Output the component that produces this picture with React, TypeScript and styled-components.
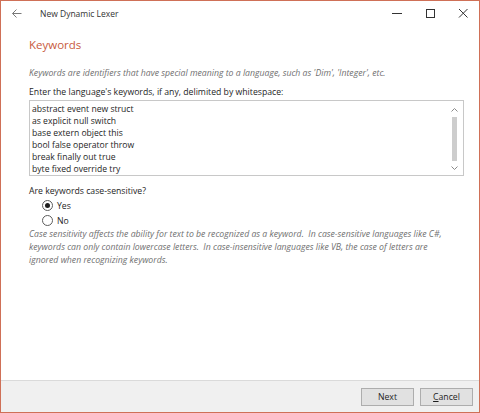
import React from 'react'
import styled, { createGlobalStyle } from 'styled-components'

const GlobalStyle = createGlobalStyle`
  html, body {
    margin: 0;
    padding: 0;
    background: #ffffff;
  }
  body {
    font-family: "Open Sans", "Noto Sans", sans-serif;
  }
`

const keywords = [
  'abstract event new struct',
  'as explicit null switch',
  'base extern object this',
  'bool false operator throw',
  'break finally out true',
  'byte fixed override try',
]

const noteLines = [
  'Case sensitivity affects the ability for text to be recognized as a keyword.\u00a0 In case-sensitive languages like C#,',
  'keywords can only contain lowercase letters.\u00a0 In case-insensitive languages like VB, the case of letters are',
  'ignored when recognizing keywords.',
]

function BackArrow() {
  return (
    <svg width="10" height="9" viewBox="0 0 10 9">
      <path d="M0.5 4.5 H9.5 M4.5 0.5 L0.5 4.5 L4.5 8.5" stroke="#7a7a7a" strokeWidth="1" fill="none" />
    </svg>
  )
}

function WindowGlyph({ kind }: { kind: 'min' | 'max' | 'close' }) {
  return (
    <svg width="10" height="10" viewBox="0 0 10 10">
      {kind === 'min' && <path d="M0 5.5 H10" stroke="#333" strokeWidth="1" />}
      {kind === 'max' && <rect x="1.5" y="1.5" width="8" height="8" stroke="#333" strokeWidth="1" fill="none" />}
      {kind === 'close' && <path d="M1 1 L9.5 9.5 M9.5 1 L1 9.5" stroke="#333" strokeWidth="1" />}
    </svg>
  )
}

function Chevron({ up }: { up: boolean }) {
  return (
    <svg width="7" height="4" viewBox="0 0 7 4">
      <path d={up ? 'M0.5 3.5 L3.5 0.5 L6.5 3.5' : 'M0.5 0.5 L3.5 3.5 L6.5 0.5'} stroke="#8a8a8a" strokeWidth="1" fill="none" />
    </svg>
  )
}

export default function App() {
  return (
    <>
      <GlobalStyle />
      <Window>
        <TitleBar>
          <BackButton><BackArrow /></BackButton>
          <Title>New Dynamic Lexer</Title>
          <Controls>
            <ControlButton><WindowGlyph kind="min" /></ControlButton>
            <ControlButton><WindowGlyph kind="max" /></ControlButton>
            <ControlButton><WindowGlyph kind="close" /></ControlButton>
          </Controls>
        </TitleBar>

        <Content>
          <Heading>Keywords</Heading>
          <Hint>Keywords are identifiers that have special meaning to a language, such as 'Dim', 'Integer', etc.</Hint>
          <Label>Enter the language's keywords, if any, delimited by whitespace:</Label>
          <KeywordBox>
            <KeywordLines>
              {keywords.map(k => <KeywordLine key={k}>{k}</KeywordLine>)}
            </KeywordLines>
            <ScrollBar>
              <Chevron up />
              <ScrollThumb />
              <Chevron up={false} />
            </ScrollBar>
          </KeywordBox>

          <Question>Are keywords case-sensitive?</Question>
          <RadioRow>
            <RadioCircle checked />
            <span>Yes</span>
          </RadioRow>
          <RadioRow>
            <RadioCircle checked={false} />
            <span>No</span>
          </RadioRow>
          <Note>
            {noteLines.map(l => <NoteLine key={l}>{l}</NoteLine>)}
          </Note>
        </Content>

        <Footer>
          <FooterButton>Next</FooterButton>
          <FooterButton><u>C</u>ancel</FooterButton>
        </Footer>
      </Window>
    </>
  )
}

const Window = styled.div`
  width: 480px;
  height: 413px;
  box-sizing: border-box;
  border: 1px solid #cf7057;
  display: flex;
  flex-direction: column;
  background: #ffffff;
  color: #1e1e1e;
  font-size: 8.7px;
`

const TitleBar = styled.div`
  height: 24px;
  display: flex;
  align-items: center;
`

const BackButton = styled.div`
  width: 38px;
  height: 24px;
  display: flex;
  align-items: center;
  justify-content: center;
  padding-right: 6px;
  box-sizing: border-box;
`

const Title = styled.div`
  flex: 1;
  font-size: 8.5px;
  color: #333333;
  padding-left: 1px;
`

const Controls = styled.div`
  display: flex;
  height: 24px;
`

const ControlButton = styled.div`
  width: 33px;
  height: 24px;
  display: flex;
  align-items: center;
  justify-content: center;
`

const Content = styled.div`
  flex: 1;
  padding: 0 16px 0 28px;
`

const Heading = styled.div`
  margin-top: 10px;
  font-size: 11.5px;
  line-height: 20px;
  color: #c85b3e;
`

const Hint = styled.div`
  margin-top: 11px;
  line-height: 14px;
  font-style: italic;
  color: #707070;
`

const Label = styled.div`
  margin-top: 5px;
  line-height: 14px;
`

const KeywordBox = styled.div`
  margin-top: 1px;
  width: 435px;
  height: 76px;
  box-sizing: border-box;
  border: 1px solid #c8c8c8;
  display: flex;
`

const KeywordLines = styled.div`
  flex: 1;
  padding: 2px 0 0 2px;
  overflow: hidden;
  font-size: 8.6px;
`

const KeywordLine = styled.div`
  line-height: 12px;
  white-space: nowrap;
`

const ScrollBar = styled.div`
  width: 17px;
  display: flex;
  flex-direction: column;
  align-items: center;
  padding: 7px 0 5px;
  gap: 5px;
`

const ScrollThumb = styled.div`
  width: 5px;
  flex: 1;
  background: #cdcdcd;
`

const Question = styled.div`
  margin-top: 8px;
  line-height: 14px;
`

const RadioRow = styled.div`
  height: 15px;
  display: flex;
  align-items: center;
  gap: 4px;
  padding-left: 13px;
`

const RadioCircle = styled.span<{ checked: boolean }>`
  width: 11px;
  height: 11px;
  box-sizing: border-box;
  border-radius: 50%;
  border: 1px solid #5c5c5c;
  background: #ffffff;
  display: flex;
  align-items: center;
  justify-content: center;
  &::after {
    content: '';
    width: 5px;
    height: 5px;
    border-radius: 50%;
    background: ${p => (p.checked ? '#1e1e1e' : 'transparent')};
  }
`

const Note = styled.div`
  font-style: italic;
  color: #707070;
`

const NoteLine = styled.div`
  line-height: 13px;
  white-space: nowrap;
`

const Footer = styled.div`
  height: 32px;
  box-sizing: border-box;
  border-top: 1px solid #dadada;
  background: #f0f0f0;
  display: flex;
  justify-content: flex-end;
  align-items: flex-end;
  gap: 6px;
  padding: 0 6px 6px 0;
`

const FooterButton = styled.div`
  width: 53px;
  height: 18px;
  box-sizing: border-box;
  border: 1px solid #adadad;
  background: #e1e1e1;
  display: flex;
  align-items: center;
  justify-content: center;
  color: #1e1e1e;
`
